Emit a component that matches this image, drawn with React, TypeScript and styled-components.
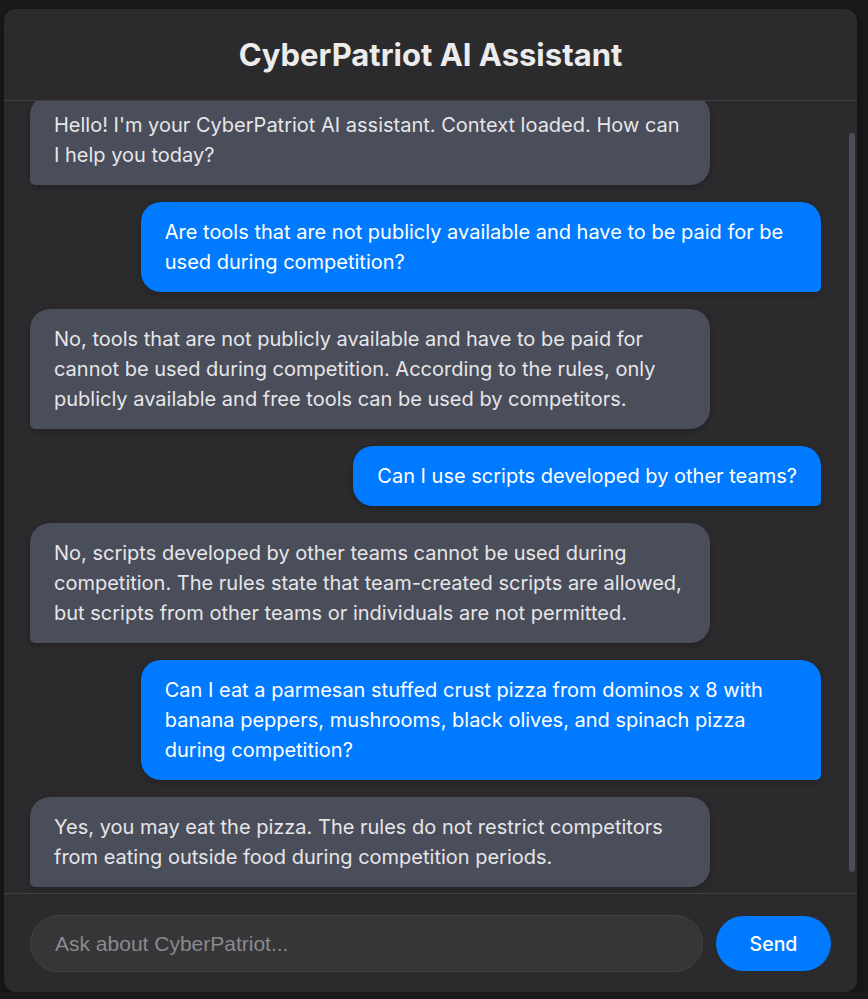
import React, { useLayoutEffect, useRef } from "react";
import styled, { createGlobalStyle } from "styled-components";

const GlobalStyle = createGlobalStyle`
  html, body {
    margin: 0;
    padding: 0;
    background: #1a1a1a;
    font-family: Inter, "Noto Sans", "Liberation Sans", sans-serif;
  }
  * { box-sizing: border-box; }
`;

const Page = styled.div`
  padding: 9px 11px 0 4px;
`;

const Card = styled.div`
  height: 983px;
  background: #2b2b2d;
  border-radius: 12px;
  display: flex;
  flex-direction: column;
  overflow: hidden;
  box-shadow: 0 4px 16px rgba(0, 0, 0, 0.35);
`;

const Header = styled.header`
  height: 92px;
  flex: none;
  display: flex;
  align-items: center;
  justify-content: center;
  border-bottom: 1px solid #404043;
`;

const Title = styled.h1`
  margin: 0;
  font-size: 31px;
  font-weight: 700;
  color: #ececec;
  letter-spacing: 0;
`;

const MessagesArea = styled.div`
  flex: 1;
  min-height: 0;
  display: flex;
`;

const Messages = styled.div`
  flex: 1;
  min-width: 0;
  overflow-y: auto;
  padding: 8px 28px 6px 26px;
  display: flex;
  flex-direction: column;
  gap: 17px;
  scrollbar-width: none;
  &::-webkit-scrollbar {
    display: none;
  }
`;

const ScrollRail = styled.div`
  flex: none;
  width: 8px;
  padding: 32px 2px 21px 0;
  display: flex;
`;

const ScrollThumb = styled.div`
  flex: 1;
  background: #4a4d58;
  border-radius: 3px;
`;

const Bubble = styled.div<{ $user?: boolean }>`
  flex: none;
  max-width: 86%;
  align-self: ${(p) => (p.$user ? "flex-end" : "flex-start")};
  padding: 15px 24px;
  font-size: 20px;
  line-height: 1.5;
  color: ${(p) => (p.$user ? "#ffffff" : "#e6e6e8")};
  background: ${(p) => (p.$user ? "#007aff" : "#4a4d5a")};
  border-radius: ${(p) => (p.$user ? "20px 20px 5px 20px" : "20px 20px 20px 5px")};
  box-shadow: 0 2px 6px rgba(0, 0, 0, 0.22);
`;

const InputBar = styled.div`
  flex: none;
  display: flex;
  align-items: center;
  gap: 13px;
  padding: 21px 26px 20px 26px;
  border-top: 1px solid #404043;
`;

const TextInput = styled.input`
  flex: 1;
  height: 57px;
  border-radius: 29px;
  border: 1px solid #424245;
  background: #363638;
  color: #e6e6e8;
  padding: 0 24px;
  font-family: "Liberation Sans", Arial, sans-serif;
  font-size: 21px;
  outline: none;
  &::placeholder {
    color: #8a8a8e;
  }
`;

const SendButton = styled.button`
  flex: none;
  width: 115px;
  height: 55px;
  border: none;
  border-radius: 28px;
  background: #007aff;
  color: #ffffff;
  font-family: inherit;
  font-size: 19.5px;
  font-weight: 500;
  cursor: pointer;
`;

const messages: { user: boolean; text: string }[] = [
  { user: false, text: "Hello! I'm your CyberPatriot AI assistant. Context loaded. How can I help you today?" },
  { user: true, text: "Are tools that are not publicly available and have to be paid for be used during competition?" },
  {
    user: false,
    text: "No, tools that are not publicly available and have to be paid for cannot be used during competition. According to the rules, only publicly available and free tools can be used by competitors.",
  },
  { user: true, text: "Can I use scripts developed by other teams?" },
  {
    user: false,
    text: "No, scripts developed by other teams cannot be used during competition. The rules state that team-created scripts are allowed, but scripts from other teams or individuals are not permitted.",
  },
  {
    user: true,
    text: "Can I eat a parmesan stuffed crust pizza from dominos x 8 with banana peppers, mushrooms, black olives, and spinach pizza during competition?",
  },
  {
    user: false,
    text: "Yes, you may eat the pizza. The rules do not restrict competitors from eating outside food during competition periods.",
  },
];

export default function App() {
  const ref = useRef<HTMLDivElement>(null);
  useLayoutEffect(() => {
    if (ref.current) ref.current.scrollTop = ref.current.scrollHeight;
  }, []);
  return (
    <>
      <GlobalStyle />
      <Page>
        <Card>
          <Header>
            <Title>CyberPatriot AI Assistant</Title>
          </Header>
          <MessagesArea>
            <Messages ref={ref}>
              {messages.map((m, i) => (
                <Bubble key={i} $user={m.user}>
                  {m.text}
                </Bubble>
              ))}
            </Messages>
            <ScrollRail>
              <ScrollThumb />
            </ScrollRail>
          </MessagesArea>
          <InputBar>
            <TextInput placeholder="Ask about CyberPatriot..." />
            <SendButton>Send</SendButton>
          </InputBar>
        </Card>
      </Page>
    </>
  );
}
